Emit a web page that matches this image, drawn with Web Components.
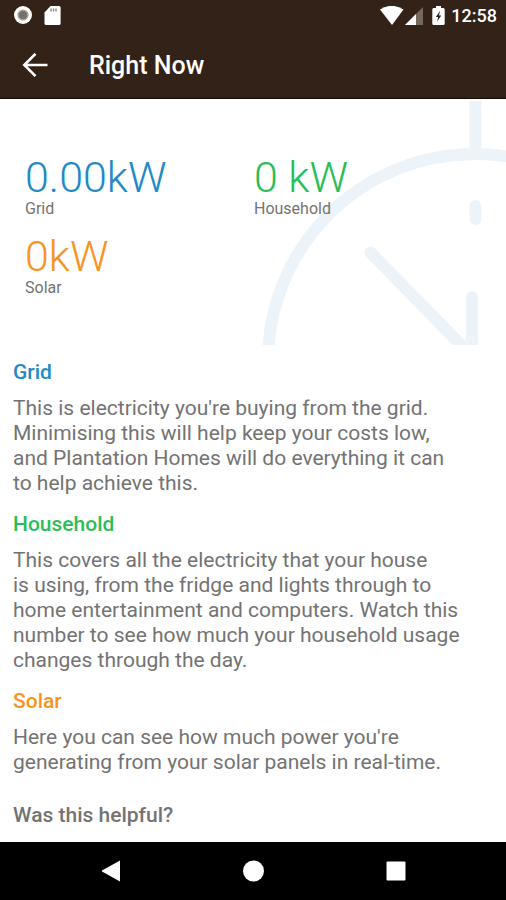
<!DOCTYPE html>
<html lang="en">
<head>
<meta charset="utf-8">
<meta name="viewport" content="width=device-width, initial-scale=1">
<title>Right Now</title>
<style>
  body { margin: 0; background: #fff; color: #737373; font-family: Roboto, "Liberation Sans", sans-serif; --grid: #2389c4; --household: #2bbd58; --solar: #f7941f; --bar: #322217; }
</style>
</head>
<body>
<now-screen></now-screen>
<script>
const define = (name, html) => {
  const template = document.createElement('template');
  template.innerHTML = html;
  customElements.define(name, class extends HTMLElement {
    constructor() {
      super();
      this.attachShadow({ mode: 'open' }).append(template.content.cloneNode(true));
    }
  });
};

define('status-bar', `
<style>
  :host { display: flex; align-items: center; justify-content: space-between; height: 32px; padding: 0 9px 0 13px; box-sizing: border-box; background: var(--bar); color: #fff; }
  div { display: flex; align-items: center; }
  svg { display: block; }
  .left { gap: 11px; }
  .right { gap: 1px; }
  .battery { margin-left: 8px; }
  time { font-size: 18px; line-height: 32px; font-weight: 500; margin-left: 5px; }
</style>
<div class="left">
  <svg width="20" height="20" viewBox="0 0 20 20" aria-hidden="true"><circle cx="10" cy="9" r="9" fill="#fff"/><circle cx="10" cy="9" r="5.6" fill="#aaa29c"/><circle cx="10" cy="9" r="4" fill="#777069"/></svg>
  <svg width="17" height="20" viewBox="0 0 17 20" aria-hidden="true"><path d="M6.5 0H15Q16.6 0 16.6 1.500V17.500Q16.6 19 15 19H2Q.5 19 .5 17.500V6.500Z" fill="#fff"/><path d="M7 2.500v3M9.500 2.500v3M12 2.500v3" stroke="#8b837d" stroke-width="1.4"/></svg>
</div>
<div class="right">
  <svg width="24" height="20" viewBox="0 0 24 20" aria-hidden="true"><path d="M0 3.6Q11.5-4 23.5 3.600L12 19Z" fill="#fff"/></svg>
  <svg width="18" height="18" viewBox="0 0 18 18" aria-hidden="true"><path d="M0 18L18 0V18Z" fill="#75695f"/><path d="M0 18L11 7V18Z" fill="#fff"/></svg>
  <svg class="battery" width="13" height="20" viewBox="0 0 13 20" aria-hidden="true"><path d="M4 0H9V2H11.5Q12.7 2 12.7 3.500V17.500Q12.7 19 11.5 19H1.5Q.3 19 .3 17.500V3.500Q.3 2 1.5 2H4Z" fill="#fff"/><path d="M8 5L3.8 11H6.2L5 15.700L9.3 9.500H7Z" fill="#322217"/></svg>
  <time>12:58</time>
</div>`);

define('app-bar', `
<style>
  :host { display: flex; align-items: center; gap: 33px; height: 67px; padding: 2px 0 0 14px; box-sizing: border-box; background: var(--bar); color: #fff; border-bottom: 1px solid #110b06; }
  button { border: 0; padding: 8px; background: none; color: inherit; }
  svg { display: block; }
  h1 { margin: 0; font-size: 25px; line-height: 32px; font-weight: 500; }
</style>
<button type="button" aria-label="Back"><svg width="26" height="26" viewBox="0 0 26 26" fill="none" stroke="#fff" stroke-width="2.6"><path d="M25.500 12H3M13.500 .8L2.300 12L13.500 23.200"/></svg></button>
<h1><slot></slot></h1>`);

define('power-reading', `
<style>
  :host { display: block; }
  .value { font-size: 43px; line-height: 44px; font-weight: 300; }
  .label { font-size: 16px; line-height: 20px; color: #737373; }
  :host([kind=grid]) .value { color: var(--grid); }
  :host([kind=household]) .value { color: var(--household); }
  :host([kind=solar]) .value { color: var(--solar); }
</style>
<div class="value"><slot></slot></div>
<div class="label"><slot name="label"></slot></div>`);

define('power-summary', `
<style>
  :host { display: block; position: relative; overflow: hidden; }
  svg { position: absolute; right: 0; bottom: 0; }
  .readings { position: relative; display: grid; grid-template-columns: 1fr 1fr; row-gap: 15px; padding: 56px 23px 47px 25px; }
</style>
<svg width="256" height="245" viewBox="250 100 256 245" fill="none" stroke="#ecf3f9" stroke-width="12" aria-hidden="true">
  <circle cx="475" cy="361" r="207"/>
  <path d="M475.500 101V150"/>
  <path d="M475.500 206V219M370.500 252.500L466 350M472 297V350" stroke-linecap="round"/>
</svg>
<div class="readings"><slot></slot></div>`);

define('info-section', `
<style>
  :host { display: block; }
  h2 { margin: 0 0 11px; font-size: 21px; line-height: 26px; font-weight: 500; }
  p { margin: 0; font-size: 21px; line-height: 25px; }
  :host([kind=grid]) h2 { color: var(--grid); }
  :host([kind=household]) h2 { color: var(--household); }
  :host([kind=solar]) h2 { color: var(--solar); }
</style>
<h2><slot name="title"></slot></h2>
<p><slot></slot></p>`);

define('nav-bar', `
<style>
  :host { display: flex; justify-content: center; gap: 98px; height: 58px; background: #000; align-items: center; }
  button { border: 0; padding: 11px; background: none; }
  svg { display: block; }
</style>
<button type="button" aria-label="Back"><svg width="22" height="22" viewBox="0 0 22 22" fill="#fff"><path d="M20 .5V21.500L2 11.500Q1.500 11 2 10.500Z"/></svg></button>
<button type="button" aria-label="Home"><svg width="22" height="22" viewBox="0 0 22 22" fill="#fff"><circle cx="11.500" cy="11" r="10.500"/></svg></button>
<button type="button" aria-label="Recent apps"><svg width="22" height="22" viewBox="0 0 22 22" fill="#fff"><rect x="2.500" y="1.500" width="19" height="19" rx="1"/></svg></button>`);

define('now-screen', `
<style>
  :host { display: flex; flex-direction: column; min-height: 100vh; }
  main { flex: 1; }
  .info { display: flex; flex-direction: column; gap: 15px; padding: 14px 40px 8px 13px; }
  .helpful { margin: 12px 0 0; font-size: 21px; line-height: 26px; font-weight: 500; }
</style>
<status-bar></status-bar>
<app-bar>Right Now</app-bar>
<main>
  <power-summary>
    <power-reading kind="grid">0.00kW<span slot="label">Grid</span></power-reading>
    <power-reading kind="household">0 kW<span slot="label">Household</span></power-reading>
    <power-reading kind="solar">0kW<span slot="label">Solar</span></power-reading>
  </power-summary>
  <div class="info">
    <info-section kind="grid"><span slot="title">Grid</span>This is electricity you're buying from the grid. Minimising this will help keep your costs low, and Plantation Homes will do everything it can to help achieve this.</info-section>
    <info-section kind="household"><span slot="title">Household</span>This covers all the electricity that your house<br>is using, from the fridge and lights through to home entertainment and computers. Watch this number to see how much your household usage changes through the day.</info-section>
    <info-section kind="solar"><span slot="title">Solar</span>Here you can see how much power you're generating from your solar panels in real-time.</info-section>
    <h2 class="helpful">Was this helpful?</h2>
  </div>
</main>
<nav-bar></nav-bar>`);
</script>
</body>
</html>
